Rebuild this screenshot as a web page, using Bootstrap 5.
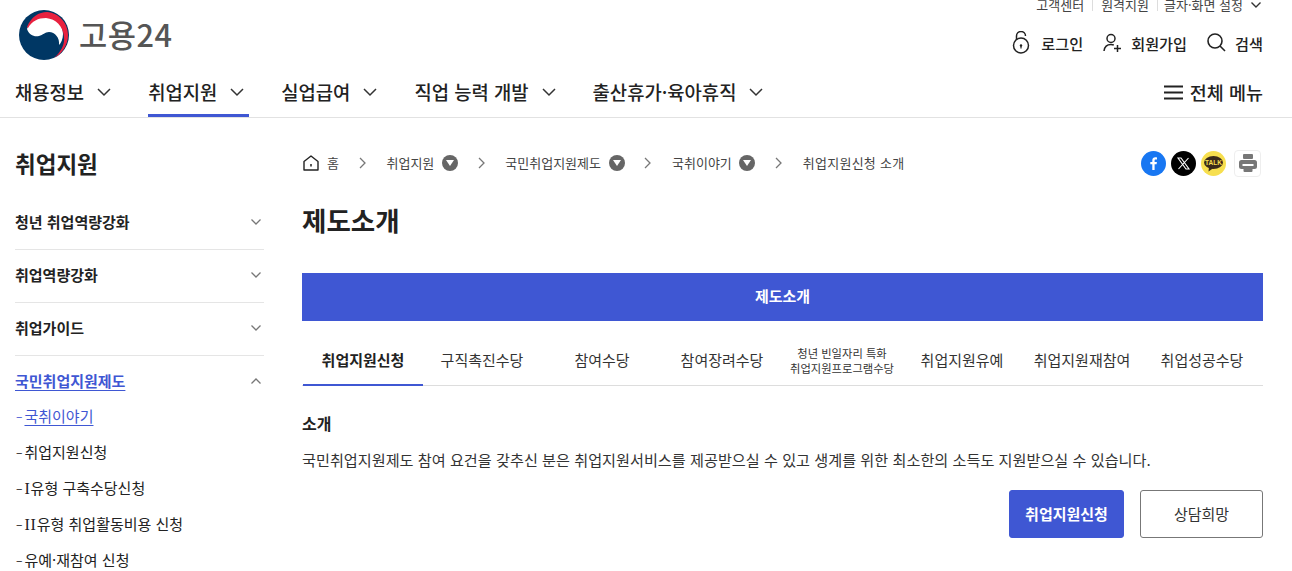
<!DOCTYPE html>
<html lang="ko">
<head>
<meta charset="UTF-8">
<meta name="viewport" content="width=device-width, initial-scale=1.0">
<title>고용24 - 제도소개</title>
<link href="https://cdn.jsdelivr.net/npm/bootstrap@5.3.0/dist/css/bootstrap.min.css" rel="stylesheet">
<style>
html, body { height: 571px; overflow: hidden; }
body {
    font-family: "Noto Sans CJK KR", "Noto Sans", sans-serif;
    color: #222;
    background: #fff;
    font-size: 14px;
}
a { color: inherit; text-decoration: none; }

/* header */
.site-header { height: 118px; border-bottom: 1px solid #e2e2e2; padding: 0 29px 0 15px; }
.util-row { height: 9px; line-height: 9px; font-size: 13px; color: #444; gap: 8px; padding-right: 2px; }
.util-last { margin-left: -2px; }
.util-sep { width: 1px; height: 12px; background: #ddd; }
.brand-row { height: 62px; padding-top: 1px; }
.brand-logo { margin-left: 4px; }
.brand-name { font-size: 30.700px; font-weight: 500; color: #555; line-height: 40px; margin-left: 10px; letter-spacing: .5px; padding-bottom: 2px; }
.member-links { gap: 20px; font-size: 15.200px; font-weight: 500; color: #222; margin-top: 21px; }
.member-links a { gap: 9px; }
.member-links a.login-link { gap: 11px; }
.gnb-row { height: 46px; }
.gnb-link { font-size: 18.800px; font-weight: 500; color: #222; height: 46px; padding: 6px 5px 0 0; gap: 13px; margin-right: 32px; border-bottom: 3px solid transparent; line-height: 30px; }
.gnb-link.on { border-bottom-color: #3f57d3; }
.all-menu { font-size: 18.500px; font-weight: 500; gap: 7px; line-height: 30px; padding-top: 6px; }

/* side menu */
.side-wrap { width: 249px; margin-left: 15px; flex: none; }
.side-title { font-size: 22.500px; font-weight: 700; line-height: 32px; margin: 29px 0 18px; color: #222; }
.side-item { height: 53px; border-bottom: 1px solid #e5e5e5; font-size: 15px; font-weight: 700; color: #222; padding: 0 3px 2px 0; }
.side-item.on { border-bottom: 0; color: #3f57d3; height: 52px; }
.side-item.on span { text-decoration: underline; text-underline-offset: 3px; }
.side-sub { font-size: 15px; line-height: 36px; color: #222; margin-top: -10px; }
.side-sub a { display: block; height: 36px; }
.side-sub a::before { content: "–"; font-size: 12px; margin: 0 2px 0 1px; }
.side-sub a.on { color: #3f57d3; }
.side-sub a.on span { text-decoration: underline; text-underline-offset: 3px; }
.roman-num { font-family: "Liberation Serif", serif; font-size: 16px; letter-spacing: .8px; line-height: 1; }

/* content */
.main-wrap { width: 961px; margin-left: 38px; flex: none; }
.crumb-row { height: 26px; margin-top: 32px; font-size: 13px; color: #444; }
.crumb-row .crumb-step { gap: 7.500px; }
.crumb-row .crumb-home { gap: 8px; margin-left: 1px; }
.crumb-gt { margin: 0 19.750px; }
.crumb-last { letter-spacing: .25px; }
.crumb-dot { width: 16px; height: 16px; border-radius: 50%; background: #666; }
.share-btns { gap: 5px; padding-right: 2px; }
.share-print { width: 27px; height: 27px; border: 1px solid #eee; border-radius: 4px; margin-left: 3px; }
.page-title { font-size: 26.500px; font-weight: 700; line-height: 38px; margin: 25px 0 34px; color: #222; }
.banner { height: 48px; background: #3f57d3; color: #fff; font-size: 15px; font-weight: 700; padding-bottom: 2px; }
.tab-row { height: 65px; border-bottom: 1px solid #ddd; }
.tab-cell { width: 120px; flex: none; height: 64px; font-size: 15px; color: #333; text-align: center; padding-top: 15px; }
.tab-cell.on { font-weight: 700; color: #222; border-bottom: 2px solid #3f57d3; height: 65px; margin-left: 1px; }
.tab-cell.on + .tab-cell { margin-left: -1px; }
.tab-cell.small-two { font-size: 11.300px; line-height: 15px; }
.sect-title { font-size: 16px; font-weight: 700; line-height: 24px; margin: 25px 0 12px; color: #222; }
.sect-text { font-size: 15.160px; line-height: 24px; color: #333; margin: 0; }
.act-row { gap: 16px; margin-top: 19px; }
.act-btn { width: 123px; height: 48px; font-size: 15px; border-radius: 3px; padding: 0; }
.act-main { width: 115px; background: #3f57d3; border-color: #3f57d3; color: #fff; font-weight: 700; }
.act-sub { background: #fff; border: 1px solid #777; color: #333; }
</style>
</head>
<body>

<header class="site-header">
    <div class="util-row d-flex justify-content-end align-items-center">
        <a href="#">고객센터</a><i class="util-sep"></i>
        <a href="#">원격지원</a><i class="util-sep"></i>
        <a href="#" class="util-last d-flex align-items-center gap-2">글자·화면 설정
            <svg width="10" height="6" viewBox="0 0 10 6" fill="none" stroke="#333" stroke-width="1.400"><path d="M.5.5 5 5 9.500.5"/></svg>
        </a>
    </div>
    <div class="brand-row d-flex justify-content-between align-items-start">
        <a href="#" class="d-flex align-items-center">
            <svg class="brand-logo" width="50" height="50" viewBox="0 0 50 50">
                <circle cx="25" cy="25" r="25" fill="#003764"/>
                <path d="M8 19C11 11 18 6 27 6c10 0 17 9 17 18 0 5-2 9-4 11 1-7-4-13-10-13-4 0-6 3-10 4C15 27 10 25 8 19z" fill="#fff"/>
                <path d="M8 17C12 7 20 2 28 2c12 1 21 11 21 23 0 10-6 19-14 23 7-6 11-14 10-21C44 16 37 9 27 8 19 8 13 11 9 18z" fill="#e8213f"/>
            </svg>
            <span class="brand-name">고용24</span>
        </a>
        <div class="member-links d-flex align-items-center">
            <a href="#" class="login-link d-flex align-items-center">
                <svg width="18" height="24" viewBox="0 0 18 24" fill="none" stroke="#222" stroke-width="1.500"><circle cx="9" cy="14.500" r="7.500"/><path d="M4.500 8.500V5a4.500 4.500 0 0 1 9 0"/><circle cx="9" cy="14.500" r="1.200" fill="#222" stroke="none"/><path d="M9 15v2.500" stroke-width="1.200"/></svg>
                로그인
            </a>
            <a href="#" class="d-flex align-items-center">
                <svg width="19" height="20" viewBox="0 0 19 20" fill="none" stroke="#222" stroke-width="1.500"><circle cx="8" cy="5.500" r="4"/><path d="M1 18c.5-4 3-6.500 7-6.500 1 0 2 .2 2.800.5"/><path d="M14.500 12v7M11 15.500h7"/></svg>
                회원가입
            </a>
            <a href="#" class="d-flex align-items-center">
                <svg width="19" height="19" viewBox="0 0 19 19" fill="none" stroke="#222" stroke-width="1.600"><circle cx="8" cy="8" r="7"/><path d="m13 13 5 5"/></svg>
                검색
            </a>
        </div>
    </div>
    <nav class="gnb-row d-flex align-items-start">
        <a href="#" class="gnb-link d-flex align-items-start">채용정보 <svg class="mt-2" width="14" height="14" viewBox="0 0 14 14" fill="none" stroke="#333" stroke-width="1.500"><path d="m1 4 6 6 6-6"/></svg></a>
        <a href="#" class="gnb-link on d-flex align-items-start">취업지원 <svg class="mt-2" width="14" height="14" viewBox="0 0 14 14" fill="none" stroke="#333" stroke-width="1.500"><path d="m1 4 6 6 6-6"/></svg></a>
        <a href="#" class="gnb-link d-flex align-items-start">실업급여 <svg class="mt-2" width="14" height="14" viewBox="0 0 14 14" fill="none" stroke="#333" stroke-width="1.500"><path d="m1 4 6 6 6-6"/></svg></a>
        <a href="#" class="gnb-link d-flex align-items-start">직업 능력 개발 <svg class="mt-2" width="14" height="14" viewBox="0 0 14 14" fill="none" stroke="#333" stroke-width="1.500"><path d="m1 4 6 6 6-6"/></svg></a>
        <a href="#" class="gnb-link d-flex align-items-start">출산휴가·육아휴직 <svg class="mt-2" width="14" height="14" viewBox="0 0 14 14" fill="none" stroke="#333" stroke-width="1.500"><path d="m1 4 6 6 6-6"/></svg></a>
        <a href="#" class="all-menu d-flex align-items-start ms-auto">
            <svg class="mt-2" width="19" height="15" viewBox="0 0 19 15" fill="none" stroke="#222" stroke-width="2"><path d="M0 1.500h19M0 7.500h19M0 13.500h19"/></svg>
            전체 메뉴
        </a>
    </nav>
</header>

<div class="d-flex">
    <aside class="side-wrap">
        <h2 class="side-title">취업지원</h2>
        <a href="#" class="side-item d-flex justify-content-between align-items-center">청년 취업역량강화 <svg width="10" height="6" viewBox="0 0 10 6" fill="none" stroke="#777" stroke-width="1.300"><path d="M.5.5 5 5 9.500.5"/></svg></a>
        <a href="#" class="side-item d-flex justify-content-between align-items-center">취업역량강화 <svg width="10" height="6" viewBox="0 0 10 6" fill="none" stroke="#777" stroke-width="1.300"><path d="M.5.5 5 5 9.500.5"/></svg></a>
        <a href="#" class="side-item d-flex justify-content-between align-items-center">취업가이드 <svg width="10" height="6" viewBox="0 0 10 6" fill="none" stroke="#777" stroke-width="1.300"><path d="M.5.5 5 5 9.500.5"/></svg></a>
        <a href="#" class="side-item on d-flex justify-content-between align-items-center"><span>국민취업지원제도</span> <svg width="10" height="6" viewBox="0 0 10 6" fill="none" stroke="#777" stroke-width="1.300"><path d="M.5 5.500 5 1l4.500 4.500"/></svg></a>
        <div class="side-sub d-flex flex-column">
            <a href="#" class="on"><span>국취이야기</span></a>
            <a href="#">취업지원신청</a>
            <a href="#"><span class="roman-num">I</span>유형 구축수당신청</a>
            <a href="#"><span class="roman-num">II</span>유형 취업활동비용 신청</a>
            <a href="#">유예·재참여 신청</a>
        </div>
    </aside>

    <main class="main-wrap">
        <div class="crumb-row d-flex align-items-center">
            <a href="#" class="crumb-step crumb-home d-flex align-items-center">
                <svg width="16" height="16" viewBox="0 0 16 16" fill="none" stroke="#222" stroke-width="1.400"><path d="M1 15V6.500L8 1l7 5.500V15z" stroke-linejoin="round"/><path d="M8 9v2.500" stroke-width="1.500"/></svg>
                홈
            </a>
            <svg class="crumb-gt" width="8" height="12" viewBox="0 0 8 12" fill="none" stroke="#777" stroke-width="1.300"><path d="m1 1 5 5-5 5"/></svg>
            <a href="#" class="crumb-step d-flex align-items-center">취업지원 <span class="crumb-dot d-flex align-items-center justify-content-center"><svg width="8" height="6" viewBox="0 0 8 6" fill="#fff"><path d="M0 0h8L4 6z"/></svg></span></a>
            <svg class="crumb-gt" width="8" height="12" viewBox="0 0 8 12" fill="none" stroke="#777" stroke-width="1.300"><path d="m1 1 5 5-5 5"/></svg>
            <a href="#" class="crumb-step d-flex align-items-center">국민취업지원제도 <span class="crumb-dot d-flex align-items-center justify-content-center"><svg width="8" height="6" viewBox="0 0 8 6" fill="#fff"><path d="M0 0h8L4 6z"/></svg></span></a>
            <svg class="crumb-gt" width="8" height="12" viewBox="0 0 8 12" fill="none" stroke="#777" stroke-width="1.300"><path d="m1 1 5 5-5 5"/></svg>
            <a href="#" class="crumb-step d-flex align-items-center">국취이야기 <span class="crumb-dot d-flex align-items-center justify-content-center"><svg width="8" height="6" viewBox="0 0 8 6" fill="#fff"><path d="M0 0h8L4 6z"/></svg></span></a>
            <svg class="crumb-gt" width="8" height="12" viewBox="0 0 8 12" fill="none" stroke="#777" stroke-width="1.300"><path d="m1 1 5 5-5 5"/></svg>
            <span class="crumb-last">취업지원신청 소개</span>
            <div class="share-btns d-flex align-items-center ms-auto">
                <svg width="25" height="25" viewBox="0 0 25 25"><circle cx="12.500" cy="12.500" r="12.500" fill="#1877f2"/><path d="M13.600 19v-5.800h2l.3-2.300h-2.300V9.500c0-.7.200-1.100 1.100-1.100H16v-2c-.3 0-.9-.1-1.700-.1-1.800 0-3 1.100-3 3v1.600h-2v2.300h2V19z" fill="#fff"/></svg>
                <svg width="25" height="25" viewBox="0 0 25 25"><circle cx="12.500" cy="12.500" r="12.500" fill="#000"/><path d="M7 7h3l8 11h-3zM17.500 7 7.500 18" fill="none" stroke="#fff" stroke-width="1.100"/></svg>
                <svg width="25" height="25" viewBox="0 0 25 25"><circle cx="12.500" cy="12.500" r="12.500" fill="#f7df4f"/><ellipse cx="12.500" cy="11.500" rx="9.500" ry="6.500" fill="#3a2a1a"/><path d="M8 16 7.500 20.500l5-3.500z" fill="#3a2a1a"/><text x="12.500" y="13.800" text-anchor="middle" font-size="6.500" font-weight="700" font-family="Liberation Sans, sans-serif" fill="#f7df4f">TALK</text></svg>
                <span class="share-print d-flex align-items-center justify-content-center">
                    <svg width="18" height="18" viewBox="0 0 18 18"><rect x="4" y="0" width="10" height="5" rx="1" fill="#777"/><rect x="0" y="6" width="18" height="9" rx="2.500" fill="#777"/><rect x="3.500" y="10" width="11" height="2" fill="#fff"/><rect x="4.500" y="12" width="9" height="6" rx="1" fill="#777"/></svg>
                </span>
            </div>
        </div>

        <h1 class="page-title">제도소개</h1>

        <div class="banner d-flex align-items-center justify-content-center">제도소개</div>

        <div class="tab-row d-flex">
            <a href="#" class="tab-cell on d-flex align-items-center justify-content-center">취업지원신청</a>
            <a href="#" class="tab-cell d-flex align-items-center justify-content-center">구직촉진수당</a>
            <a href="#" class="tab-cell d-flex align-items-center justify-content-center">참여수당</a>
            <a href="#" class="tab-cell d-flex align-items-center justify-content-center">참여장려수당</a>
            <a href="#" class="tab-cell small-two d-flex align-items-center justify-content-center">청년 빈일자리 특화<br>취업지원프로그램수당</a>
            <a href="#" class="tab-cell d-flex align-items-center justify-content-center">취업지원유예</a>
            <a href="#" class="tab-cell d-flex align-items-center justify-content-center">취업지원재참여</a>
            <a href="#" class="tab-cell d-flex align-items-center justify-content-center">취업성공수당</a>
        </div>

        <h3 class="sect-title">소개</h3>
        <p class="sect-text">국민취업지원제도 참여 요건을 갖추신 분은 취업지원서비스를 제공받으실 수 있고 생계를 위한 최소한의 소득도 지원받으실 수 있습니다.</p>

        <div class="act-row d-flex justify-content-end">
            <a href="#" class="btn act-btn act-main d-flex align-items-center justify-content-center">취업지원신청</a>
            <a href="#" class="btn act-btn act-sub d-flex align-items-center justify-content-center">상담희망</a>
        </div>
    </main>
</div>

<script src="https://cdn.jsdelivr.net/npm/bootstrap@5.3.0/dist/js/bootstrap.bundle.min.js"></script>
</body>
</html>
